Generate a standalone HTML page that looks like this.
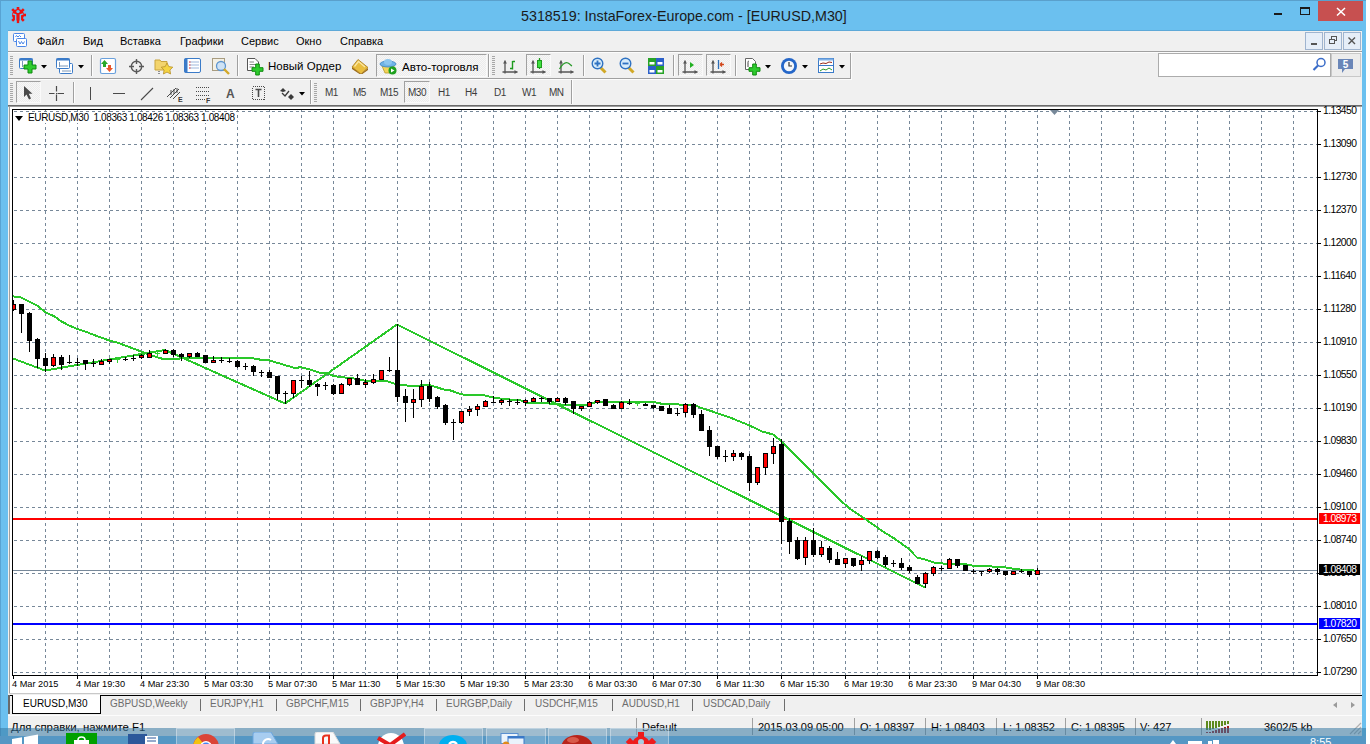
<!DOCTYPE html><html><head><meta charset="utf-8"><style>
*{margin:0;padding:0;box-sizing:border-box}
html,body{width:1370px;height:744px;overflow:hidden;background:#fff;font-family:"Liberation Sans", sans-serif}
.a{position:absolute}
.t{position:absolute;white-space:nowrap;line-height:1;font-family:"Liberation Sans", sans-serif}
</style></head><body><div class="a" style="left:0;top:0;width:1366px;height:744px;background:#6bc0ef;border-top:1px solid #5aa0cc;border-left:1px solid #58a3d3"></div>
<svg class="a" style="left:10px;top:7px" width="16" height="17"><circle cx="8" cy="8" r="6" fill="#ee1111"/><rect x="6.7" y="-0.2" width="2.6" height="3.5" fill="#ee1111" transform="rotate(180 8 8)"/><rect x="6.7" y="-0.2" width="2.6" height="3.5" fill="#ee1111" transform="rotate(225 8 8)"/><rect x="6.7" y="-0.2" width="2.6" height="3.5" fill="#ee1111" transform="rotate(315 8 8)"/><rect x="6.7" y="-0.2" width="2.6" height="3.5" fill="#ee1111" transform="rotate(360 8 8)"/><rect x="6.7" y="-0.2" width="2.6" height="3.5" fill="#ee1111" transform="rotate(405 8 8)"/><rect x="6.7" y="-0.2" width="2.6" height="3.5" fill="#ee1111" transform="rotate(450 8 8)"/><rect x="6.7" y="-0.2" width="2.6" height="3.5" fill="#ee1111" transform="rotate(495 8 8)"/><circle cx="8" cy="4.6" r="1.7" fill="#6bc0ef"/><path d="M2.8 6.9L5.7 7.9V16.5M13.2 6.9L10.3 7.9V16.5" stroke="#6bc0ef" stroke-width="1.5" fill="none"/><rect x="6.5" y="13.5" width="3" height="3" fill="#6bc0ef"/><path d="M8 6V16" stroke="#ee1111" stroke-width="2.2"/></svg>
<div class="t" style="left:521px;top:9px;font-size:14.3px;color:#1b1b1b;">5318519: InstaForex-Europe.com - [EURUSD,M30]</div>
<div class="a" style="left:1274px;top:13px;width:8px;height:2px;background:#1a1a1a"></div>
<div class="a" style="left:1300px;top:7px;width:10px;height:8px;border:1px solid #1a1a1a;border-top-width:2px"></div>
<div class="a" style="left:1318px;top:1px;width:45px;height:20px;background:#c75050"></div>
<svg class="a" style="left:1336px;top:7px" width="10" height="9"><path d="M1 1L9 8.5M9 1L1 8.5" stroke="#fff" stroke-width="1.5"/></svg>
<div class="a" style="left:8px;top:30px;width:1354px;height:1px;background:#5ea9d8"></div>
<div class="a" style="left:8px;top:31px;width:1354px;height:713px;background:#f0f0f0"></div>
<div class="a" style="left:8px;top:51px;width:1354px;height:1px;background:#a0a0a0"></div>
<div class="a" style="left:8px;top:52px;width:1354px;height:1px;background:#fcfcfc"></div>
<div class="a" style="left:8px;top:78px;width:843px;height:1px;background:#a0a0a0"></div>
<div class="a" style="left:8px;top:79px;width:844px;height:1px;background:#fcfcfc"></div>
<div class="a" style="left:8px;top:105px;width:1354px;height:1px;background:#6a6a6a"></div>
<div class="a" style="left:8px;top:106px;width:1354px;height:1px;background:#9c9c9c"></div>
<svg class="a" style="left:13px;top:33px" width="15" height="15"><rect x="0.5" y="0.5" width="11" height="8" rx="1" fill="#fff" stroke="#4a86e8"/><path d="M2.5 4L3.5 2.5L5 4L6.5 2.5L8 4" stroke="#4a86e8" fill="none"/><rect x="3.5" y="5.5" width="10" height="8" rx="1" fill="#fff" stroke="#4a86e8"/><path d="M5.5 8L7 11L8.5 8.5L10 11L11.5 8.5" stroke="#4a86e8" fill="none"/></svg>
<div class="t" style="left:37px;top:36px;font-size:11px;color:#000;">Файл</div>
<div class="t" style="left:83px;top:36px;font-size:11px;color:#000;">Вид</div>
<div class="t" style="left:120px;top:36px;font-size:11px;color:#000;">Вставка</div>
<div class="t" style="left:180px;top:36px;font-size:11px;color:#000;">Графики</div>
<div class="t" style="left:241px;top:36px;font-size:11px;color:#000;">Сервис</div>
<div class="t" style="left:296px;top:36px;font-size:11px;color:#000;">Окно</div>
<div class="t" style="left:340px;top:36px;font-size:11px;color:#000;">Справка</div>
<div class="a" style="left:1305px;top:32px;width:18px;height:18px;background:#e6eef8;border:1px solid #9fb4cf"></div><div class="a" style="left:1324px;top:32px;width:18px;height:18px;background:#e6eef8;border:1px solid #9fb4cf"></div><div class="a" style="left:1343px;top:32px;width:18px;height:18px;background:#e6eef8;border:1px solid #9fb4cf"></div><div class="a" style="left:1311px;top:43px;width:6px;height:2px;background:#555"></div><svg class="a" style="left:1328px;top:35px" width="10" height="10"><rect x="3.5" y="1.5" width="5" height="4" fill="none" stroke="#555"/><rect x="1.5" y="4.5" width="5" height="4" fill="#e6eef8" stroke="#555"/></svg><svg class="a" style="left:1347px;top:36px" width="10" height="10"><path d="M1.5 1.5L8 8M8 1.5L1.5 8" stroke="#555" stroke-width="1.4"/></svg>
<svg class="a" style="left:10px;top:56px" width="3" height="20"><rect x="0" y="0" width="3" height="1" fill="#a7a7a7"/><rect x="0" y="2" width="3" height="1" fill="#a7a7a7"/><rect x="0" y="4" width="3" height="1" fill="#a7a7a7"/><rect x="0" y="6" width="3" height="1" fill="#a7a7a7"/><rect x="0" y="8" width="3" height="1" fill="#a7a7a7"/><rect x="0" y="10" width="3" height="1" fill="#a7a7a7"/><rect x="0" y="12" width="3" height="1" fill="#a7a7a7"/><rect x="0" y="14" width="3" height="1" fill="#a7a7a7"/><rect x="0" y="16" width="3" height="1" fill="#a7a7a7"/><rect x="0" y="18" width="3" height="1" fill="#a7a7a7"/></svg><svg class="a" style="left:18px;top:57px" width="20" height="18"><rect x="1.5" y="1.5" width="13" height="10" rx="1" fill="#fff" stroke="#3b7bc8"/><rect x="1.5" y="1.5" width="13" height="2" fill="#3b7bc8"/><path d="M4.5 4V10" stroke="#7d98b8"/><path d="M10.0 4.0H14.0V8.0H18.0V12.0H14.0V16.0H10.0V12.0H6.0V8.0H10.0Z" fill="#2ecc2e" stroke="#0f8a0f" stroke-width="1"/></svg><svg class="a" style="left:41px;top:65px" width="6" height="4"><path d="M0 0H6L3 3.5Z" fill="#000"/></svg><svg class="a" style="left:55px;top:57px" width="20" height="18"><rect x="4.5" y="6.5" width="13" height="10" rx="1" fill="#fff" stroke="#3b7bc8"/><rect x="1.5" y="1.5" width="13" height="10" rx="1" fill="#fff" stroke="#3b7bc8"/><rect x="1.5" y="1.5" width="13" height="2" fill="#3b7bc8"/><path d="M4.5 5V10M4 9H13M7 14H16" stroke="#7d98b8"/></svg><svg class="a" style="left:78px;top:65px" width="6" height="4"><path d="M0 0H6L3 3.5Z" fill="#000"/></svg><div class="a" style="left:91px;top:55px;width:1px;height:21px;background:#a0a0a0"></div><div class="a" style="left:92px;top:55px;width:1px;height:21px;background:#fdfdfd"></div><svg class="a" style="left:99px;top:57px" width="18" height="18"><rect x="1.5" y="1.5" width="15" height="15" rx="1.5" fill="#fff" stroke="#6aa0dc" stroke-width="1.2"/><path d="M5.5 3L9 7H7V10H4V7H2Z" fill="#27a827"/><path d="M10.5 15L14 11H12V8H9V11H7Z" fill="#e8552a"/></svg><svg class="a" style="left:128px;top:58px" width="17" height="17"><circle cx="8.5" cy="8.5" r="5.2" fill="none" stroke="#5a5a5a" stroke-width="1.4"/><path d="M8.5 1V6M8.5 11V16M1 8.5H6M11 8.5H16" stroke="#5a5a5a" stroke-width="1.4"/></svg><svg class="a" style="left:154px;top:57px" width="20" height="18"><path d="M1 3H6L7 4.5H13V13H1Z" fill="#f3d46c" stroke="#c9a43c"/><path d="M13 6L14.8 9.6L18.8 10.2L15.9 13L16.6 17L13 15.1L9.4 17L10.1 13L7.2 10.2L11.2 9.6Z" fill="#f5d442" stroke="#b8902a" stroke-width="0.8"/><path d="M5 14V18" stroke="#333" stroke-dasharray="1 1"/></svg><svg class="a" style="left:184px;top:58px" width="17" height="16"><rect x="0.5" y="0.5" width="16" height="14" rx="1.5" fill="#fff" stroke="#3b7bc8"/><rect x="0.5" y="0.5" width="3" height="14" fill="#3b7bc8"/><path d="M6 4H15M6 7H15M6 10H15" stroke="#9db7dc"/><path d="M5 4H6.5M5 7H6.5M5 10H6.5" stroke="#e02020"/></svg><svg class="a" style="left:211px;top:57px" width="20" height="19"><rect x="1.5" y="1.5" width="12" height="12" fill="#f4f0e4" stroke="#a89c80"/><circle cx="10" cy="9" r="4.5" fill="#cfe3f5" stroke="#5f96cf" stroke-width="1.3"/><path d="M13 12L18 17" stroke="#d2a92a" stroke-width="2.4"/></svg><div class="a" style="left:237px;top:55px;width:1px;height:21px;background:#a0a0a0"></div><div class="a" style="left:238px;top:55px;width:1px;height:21px;background:#fdfdfd"></div><svg class="a" style="left:246px;top:57px" width="19" height="19"><path d="M1.5 1.5H9L12.5 5V13.5H1.5Z" fill="#fff" stroke="#555"/><path d="M3.5 5H8M3.5 7.5H10M3.5 10H8" stroke="#888"/><path d="M9.7 7.0H13.3V10.7H17.0V14.3H13.3V18.0H9.7V14.3H6.0V10.7H9.7Z" fill="#2ecc2e" stroke="#0f8a0f" stroke-width="1"/></svg><div class="t" style="left:268px;top:61px;font-size:11.5px;color:#000">Новый Ордер</div><svg class="a" style="left:351px;top:58px" width="18" height="16"><path d="M1 9L10 16L17 10V12L10 17L1 11Z" fill="#9a6a1a"/><path d="M1 9L7 1.5L17 9.5L10 16Z" fill="#e9bd3e" stroke="#a8781c" stroke-width="0.8"/><path d="M3.5 8.5L7.5 3.5L14 9" fill="none" stroke="#fbe7a2" stroke-width="1.3"/></svg><div class="a" style="left:376px;top:54px;width:111px;height:23px;border-left:1px solid #a0a0a0;border-top:1px solid #a0a0a0;border-right:1px solid #fafafa;border-bottom:1px solid #fafafa;background-color:#f7f7f7;background-image:linear-gradient(45deg,#ececec 25%,transparent 25%,transparent 75%,#ececec 75%),linear-gradient(45deg,#ececec 25%,transparent 25%,transparent 75%,#ececec 75%);background-size:2px 2px;background-position:0 0,1px 1px"></div><svg class="a" style="left:379px;top:58px" width="18" height="17"><path d="M3 8L15 8L13 15L6 15Z" fill="#f3d45a" stroke="#b89a2a" stroke-width="0.8"/><ellipse cx="9" cy="6" rx="8" ry="3" fill="#6fb3e6" stroke="#3a84c4" stroke-width="0.8"/><ellipse cx="9" cy="4" rx="4" ry="3" fill="#8cc6ef"/><circle cx="13.5" cy="12.5" r="4" fill="#1ea01e"/><path d="M12 10.5L15.5 12.5L12 14.5Z" fill="#fff"/></svg><div class="t" style="left:402px;top:61px;font-size:11.6px;color:#000">Авто-торговля</div><div class="a" style="left:488px;top:54px;width:1px;height:23px;background:#a0a0a0"></div><div class="a" style="left:489px;top:54px;width:1px;height:23px;background:#fdfdfd"></div><svg class="a" style="left:492px;top:56px" width="3" height="20"><rect x="0" y="0" width="3" height="1" fill="#a7a7a7"/><rect x="0" y="2" width="3" height="1" fill="#a7a7a7"/><rect x="0" y="4" width="3" height="1" fill="#a7a7a7"/><rect x="0" y="6" width="3" height="1" fill="#a7a7a7"/><rect x="0" y="8" width="3" height="1" fill="#a7a7a7"/><rect x="0" y="10" width="3" height="1" fill="#a7a7a7"/><rect x="0" y="12" width="3" height="1" fill="#a7a7a7"/><rect x="0" y="14" width="3" height="1" fill="#a7a7a7"/><rect x="0" y="16" width="3" height="1" fill="#a7a7a7"/><rect x="0" y="18" width="3" height="1" fill="#a7a7a7"/></svg><svg class="a" style="left:502px;top:58px" width="17" height="16"><path d="M3.0 2.5V15.5 M0.5 14.0H15.5" stroke="#555" stroke-width="1.3" fill="none"/><path d="M1.0 5.5L3.0 2.5L5.0 5.5Z M12.5 12.0L15.5 14.0L12.5 16.0Z" fill="#555"/><path d="M10.5 3V11.5M10.5 3.5H13M8 10.5H10.5" stroke="#1d9a1d" stroke-width="1.4" fill="none"/></svg><div class="a" style="left:526px;top:54px;width:25px;height:22px;border-left:1px solid #a0a0a0;border-top:1px solid #a0a0a0;border-right:1px solid #fafafa;border-bottom:1px solid #fafafa;background-color:#f7f7f7;background-image:linear-gradient(45deg,#ececec 25%,transparent 25%,transparent 75%,#ececec 75%),linear-gradient(45deg,#ececec 25%,transparent 25%,transparent 75%,#ececec 75%);background-size:2px 2px;background-position:0 0,1px 1px"></div><svg class="a" style="left:530px;top:57px" width="17" height="17"><path d="M3.0 3.5V16.5 M0.5 15.0H15.5" stroke="#555" stroke-width="1.3" fill="none"/><path d="M1.0 6.5L3.0 3.5L5.0 6.5Z M12.5 13.0L15.5 15.0L12.5 17.0Z" fill="#555"/><path d="M9.5 1V12" stroke="#1d9a1d" stroke-width="1.3"/><rect x="7.5" y="3.5" width="4" height="7" fill="#3ee03e" stroke="#1d9a1d"/></svg><svg class="a" style="left:558px;top:58px" width="17" height="16"><path d="M3.0 2.5V15.5 M0.5 14.0H15.5" stroke="#555" stroke-width="1.3" fill="none"/><path d="M1.0 5.5L3.0 2.5L5.0 5.5Z M12.5 12.0L15.5 14.0L12.5 16.0Z" fill="#555"/><path d="M1.5 11C5 5 8 4 10 5S13 7.5 14 8" stroke="#2a9a2a" stroke-width="1.2" fill="none"/></svg><div class="a" style="left:583px;top:55px;width:1px;height:21px;background:#a0a0a0"></div><div class="a" style="left:584px;top:55px;width:1px;height:21px;background:#fdfdfd"></div><svg class="a" style="left:591px;top:57px" width="18" height="18"><path d="M9 10L14.5 15.5" stroke="#d1a826" stroke-width="3"/><circle cx="6.5" cy="6.5" r="5.3" fill="#d8ecfa" stroke="#2f72c2" stroke-width="1.4"/><path d="M6.5 3.5V9.5M3.5 6.5H9.5" stroke="#2f72c2" stroke-width="1.8"/></svg><svg class="a" style="left:619px;top:57px" width="18" height="18"><path d="M9 10L14.5 15.5" stroke="#d1a826" stroke-width="3"/><circle cx="6.5" cy="6.5" r="5.3" fill="#d8ecfa" stroke="#2f72c2" stroke-width="1.4"/><path d="M3.5 6.5H9.5" stroke="#2f72c2" stroke-width="1.8"/></svg><svg class="a" style="left:647px;top:57px" width="18" height="18"><rect x="1" y="1" width="8" height="8" fill="#27a327"/><rect x="9" y="1" width="8" height="8" fill="#2c60c9"/><rect x="1" y="9" width="8" height="8" fill="#2c60c9"/><rect x="9" y="9" width="8" height="8" fill="#27a327"/><path d="M2.5 5H7.5V7.5H2.5ZM10.5 5H15.5V7.5H10.5ZM2.5 13H7.5V15.5H2.5ZM10.5 13H15.5V15.5H10.5Z" fill="#fff"/></svg><div class="a" style="left:673px;top:55px;width:1px;height:21px;background:#a0a0a0"></div><div class="a" style="left:674px;top:55px;width:1px;height:21px;background:#fdfdfd"></div><div class="a" style="left:678px;top:54px;width:25px;height:22px;border-left:1px solid #a0a0a0;border-top:1px solid #a0a0a0;border-right:1px solid #fafafa;border-bottom:1px solid #fafafa;background-color:#f7f7f7;background-image:linear-gradient(45deg,#ececec 25%,transparent 25%,transparent 75%,#ececec 75%),linear-gradient(45deg,#ececec 25%,transparent 25%,transparent 75%,#ececec 75%);background-size:2px 2px;background-position:0 0,1px 1px"></div><svg class="a" style="left:682px;top:58px" width="17" height="16"><path d="M3.0 2.5V15.5 M0.5 14.0H15.5" stroke="#555" stroke-width="1.3" fill="none"/><path d="M1.0 5.5L3.0 2.5L5.0 5.5Z M12.5 12.0L15.5 14.0L12.5 16.0Z" fill="#555"/><path d="M8 4V10L12 7Z" fill="#22b022"/></svg><div class="a" style="left:706px;top:54px;width:25px;height:22px;border-left:1px solid #a0a0a0;border-top:1px solid #a0a0a0;border-right:1px solid #fafafa;border-bottom:1px solid #fafafa;background-color:#f7f7f7;background-image:linear-gradient(45deg,#ececec 25%,transparent 25%,transparent 75%,#ececec 75%),linear-gradient(45deg,#ececec 25%,transparent 25%,transparent 75%,#ececec 75%);background-size:2px 2px;background-position:0 0,1px 1px"></div><svg class="a" style="left:710px;top:58px" width="17" height="16"><path d="M3.0 2.5V15.5 M0.5 14.0H15.5" stroke="#555" stroke-width="1.3" fill="none"/><path d="M1.0 5.5L3.0 2.5L5.0 5.5Z M12.5 12.0L15.5 14.0L12.5 16.0Z" fill="#555"/><path d="M8.5 2V11" stroke="#2c6fb8" stroke-width="1.3"/><path d="M10 6.5H14M10 6.5L12 4.5M10 6.5L12 8.5" stroke="#d2461a" stroke-width="1.3"/></svg><div class="a" style="left:735px;top:55px;width:1px;height:21px;background:#a0a0a0"></div><div class="a" style="left:736px;top:55px;width:1px;height:21px;background:#fdfdfd"></div><svg class="a" style="left:744px;top:57px" width="18" height="19"><path d="M1.5 1.5H8.5L11.5 4.5V12.5H1.5Z" fill="#fff" stroke="#666"/><path d="M5 4C4 4 4 5 4 6V10" stroke="#444" fill="none"/><path d="M8.7 7.0H12.3V10.7H16.0V14.3H12.3V18.0H8.7V14.3H5.0V10.7H8.7Z" fill="#2ecc2e" stroke="#0f8a0f" stroke-width="1"/></svg><svg class="a" style="left:765px;top:65px" width="6" height="4"><path d="M0 0H6L3 3.5Z" fill="#000"/></svg><svg class="a" style="left:780px;top:57px" width="18" height="18"><circle cx="9" cy="9" r="8" fill="#2466c8"/><circle cx="9" cy="9" r="5.2" fill="#f4f7fb"/><path d="M9 5V9H12" stroke="#333" stroke-width="1.2" fill="none"/></svg><svg class="a" style="left:802px;top:65px" width="6" height="4"><path d="M0 0H6L3 3.5Z" fill="#000"/></svg><svg class="a" style="left:817px;top:57px" width="18" height="17"><rect x="1.5" y="1.5" width="15" height="14" fill="#fff" stroke="#3b7bc8"/><rect x="1.5" y="1.5" width="15" height="2" fill="#7fb0e6"/><path d="M1.5 8.5H16.5" stroke="#3b7bc8"/><path d="M3 7L6 6L9 6.5L12 5L15 5.5" stroke="#9a2a1a" fill="none"/><path d="M3 14L6 12L9 13L12 11L15 13" stroke="#2a9a2a" fill="none"/></svg><svg class="a" style="left:839px;top:65px" width="6" height="4"><path d="M0 0H6L3 3.5Z" fill="#000"/></svg><div class="a" style="left:850px;top:53px;width:1px;height:26px;background:#a0a0a0"></div><div class="a" style="left:851px;top:53px;width:1px;height:27px;background:#fcfcfc"></div>
<svg class="a" style="left:10px;top:83px" width="3" height="20"><rect x="0" y="0" width="3" height="1" fill="#a7a7a7"/><rect x="0" y="2" width="3" height="1" fill="#a7a7a7"/><rect x="0" y="4" width="3" height="1" fill="#a7a7a7"/><rect x="0" y="6" width="3" height="1" fill="#a7a7a7"/><rect x="0" y="8" width="3" height="1" fill="#a7a7a7"/><rect x="0" y="10" width="3" height="1" fill="#a7a7a7"/><rect x="0" y="12" width="3" height="1" fill="#a7a7a7"/><rect x="0" y="14" width="3" height="1" fill="#a7a7a7"/><rect x="0" y="16" width="3" height="1" fill="#a7a7a7"/><rect x="0" y="18" width="3" height="1" fill="#a7a7a7"/></svg><div class="a" style="left:16px;top:81px;width:25px;height:22px;border-left:1px solid #a0a0a0;border-top:1px solid #a0a0a0;border-right:1px solid #fafafa;border-bottom:1px solid #fafafa;background-color:#f7f7f7;background-image:linear-gradient(45deg,#ececec 25%,transparent 25%,transparent 75%,#ececec 75%),linear-gradient(45deg,#ececec 25%,transparent 25%,transparent 75%,#ececec 75%);background-size:2px 2px;background-position:0 0,1px 1px"></div><svg class="a" style="left:23px;top:85px" width="10" height="16"><path d="M1 1V12L3.5 9.5L6 14.5L8 13.5L5.8 8.8H9.5Z" fill="#4a4a4a"/></svg><svg class="a" style="left:48px;top:85px" width="17" height="17"><path d="M8.5 1V6.5M8.5 9.5V16M1 8.5H6.5M9.5 8.5H16" stroke="#4a4a4a" stroke-width="1.2"/><rect x="8" y="8" width="1" height="1" fill="#4a4a4a"/></svg><div class="a" style="left:73px;top:82px;width:1px;height:21px;background:#a0a0a0"></div><div class="a" style="left:74px;top:82px;width:1px;height:21px;background:#fdfdfd"></div><div class="a" style="left:90px;top:87px;width:1px;height:13px;background:#4a4a4a"></div><div class="a" style="left:113px;top:93px;width:12px;height:1px;background:#4a4a4a"></div><svg class="a" style="left:140px;top:87px" width="14" height="14"><path d="M1 13L13 1" stroke="#4a4a4a" stroke-width="1.1"/></svg><svg class="a" style="left:166px;top:85px" width="18" height="18"><path d="M1 12L10 3M4 13L13 4M7 14L14 7" stroke="#4a4a4a" stroke-width="1"/><path d="M5 5V10M8 4V9M11 3V8" stroke="#4a4a4a" stroke-width="1"/><text x="12" y="17" font-size="7" font-weight="bold" fill="#3a3a3a" font-family="Liberation Sans">E</text></svg><svg class="a" style="left:196px;top:86px" width="16" height="17"><path d="M0 1.5H14M0 5.5H14M0 9.5H14M0 13.5H10" stroke="#4a4a4a" stroke-dasharray="1 1" shape-rendering="crispEdges"/><text x="10" y="16.5" font-size="7" font-weight="bold" fill="#3a3a3a" font-family="Liberation Sans">F</text></svg><div class="t" style="left:226px;top:88px;font-size:12px;font-weight:bold;color:#555">A</div><svg class="a" style="left:252px;top:86px" width="14" height="15"><rect x="0.5" y="0.5" width="12" height="13" fill="none" stroke="#4a4a4a" stroke-dasharray="1 1" shape-rendering="crispEdges"/><path d="M3.5 3.5H9.5M6.5 3.5V11" stroke="#4a4a4a" stroke-width="1.6"/></svg><svg class="a" style="left:279px;top:87px" width="16" height="14"><path d="M1 4L4 1L7 4L4 5Z" fill="#3a3a3a"/><path d="M9 10L12 7L15 10L12 13Z" fill="#3a3a3a"/><path d="M3 6L6 9L10 4" stroke="#3a3a3a" stroke-width="1.3" fill="none"/></svg><svg class="a" style="left:299px;top:92px" width="6" height="4"><path d="M0 0H6L3 3.5Z" fill="#000"/></svg><div class="a" style="left:310px;top:80px;width:1px;height:24px;background:#a0a0a0"></div><div class="a" style="left:311px;top:80px;width:1px;height:24px;background:#fdfdfd"></div><svg class="a" style="left:314px;top:83px" width="3" height="20"><rect x="0" y="0" width="3" height="1" fill="#a7a7a7"/><rect x="0" y="2" width="3" height="1" fill="#a7a7a7"/><rect x="0" y="4" width="3" height="1" fill="#a7a7a7"/><rect x="0" y="6" width="3" height="1" fill="#a7a7a7"/><rect x="0" y="8" width="3" height="1" fill="#a7a7a7"/><rect x="0" y="10" width="3" height="1" fill="#a7a7a7"/><rect x="0" y="12" width="3" height="1" fill="#a7a7a7"/><rect x="0" y="14" width="3" height="1" fill="#a7a7a7"/><rect x="0" y="16" width="3" height="1" fill="#a7a7a7"/><rect x="0" y="18" width="3" height="1" fill="#a7a7a7"/></svg><div class="t" style="left:325px;top:88px;font-size:10px;letter-spacing:-0.5px;color:#3c3c3c">M1</div><div class="t" style="left:353px;top:88px;font-size:10px;letter-spacing:-0.5px;color:#3c3c3c">M5</div><div class="t" style="left:380px;top:88px;font-size:10px;letter-spacing:-0.5px;color:#3c3c3c">M15</div><div class="a" style="left:404px;top:81px;width:26px;height:22px;border-left:1px solid #a0a0a0;border-top:1px solid #a0a0a0;border-right:1px solid #fafafa;border-bottom:1px solid #fafafa;background-color:#f7f7f7;background-image:linear-gradient(45deg,#ececec 25%,transparent 25%,transparent 75%,#ececec 75%),linear-gradient(45deg,#ececec 25%,transparent 25%,transparent 75%,#ececec 75%);background-size:2px 2px;background-position:0 0,1px 1px"></div><div class="t" style="left:408px;top:88px;font-size:10px;letter-spacing:-0.5px;color:#3c3c3c">M30</div><div class="t" style="left:438px;top:88px;font-size:10px;letter-spacing:-0.5px;color:#3c3c3c">H1</div><div class="t" style="left:465px;top:88px;font-size:10px;letter-spacing:-0.5px;color:#3c3c3c">H4</div><div class="t" style="left:494px;top:88px;font-size:10px;letter-spacing:-0.5px;color:#3c3c3c">D1</div><div class="t" style="left:522px;top:88px;font-size:10px;letter-spacing:-0.5px;color:#3c3c3c">W1</div><div class="t" style="left:549px;top:88px;font-size:10px;letter-spacing:-0.5px;color:#3c3c3c">MN</div><div class="a" style="left:571px;top:80px;width:1px;height:24px;background:#a0a0a0"></div><div class="a" style="left:572px;top:80px;width:1px;height:24px;background:#fdfdfd"></div>
<div class="a" style="left:1158px;top:53px;width:173px;height:24px;background:#fff;border:1px solid #acacac"></div><div class="a" style="left:1331px;top:53px;width:30px;height:24px;background:#ececec;border:1px solid #c8c8c8"></div><svg class="a" style="left:1337px;top:58px" width="17" height="16"><path d="M1 1H16V11H8L5 15V11H1Z" fill="#6a86b8"/><text x="8.5" y="10" font-size="10" font-weight="bold" fill="#fff" text-anchor="middle" font-family="Liberation Sans">5</text></svg><svg class="a" style="left:1312px;top:57px" width="15" height="15"><circle cx="9" cy="5.5" r="4" fill="none" stroke="#3a6cc8" stroke-width="1.5"/><path d="M6 8.5L1.5 13" stroke="#3a6cc8" stroke-width="2.2"/></svg>
<div class="a" style="left:9px;top:107px;width:1px;height:587px;background:#a0a0a0"></div>
<div class="a" style="left:10px;top:107px;width:1351px;height:586px;background:#fff;border-right:1px solid #dcdcdc"></div>
<div class="a" style="left:9px;top:693px;width:1352px;height:1px;background:#c8c8c8"></div>
<div class="a" style="left:1361px;top:107px;width:1px;height:587px;background:#fff"></div>
<svg width="1370" height="744" style="position:absolute;left:0;top:0">
<defs><clipPath id="pc"><rect x="13" y="110" width="1304" height="565"/></clipPath></defs>
<g clip-path="url(#pc)">
<g shape-rendering="crispEdges">
<path d="M14 111.5H1317 M14 144.5H1317 M14 177.5H1317 M14 210.5H1317 M14 243.5H1317 M14 276.5H1317 M14 309.5H1317 M14 342.5H1317 M14 375.5H1317 M14 408.5H1317 M14 441.5H1317 M14 474.5H1317 M14 507.5H1317 M14 540.5H1317 M14 573.5H1317 M14 606.5H1317 M14 639.5H1317 M14 672.5H1317" stroke="#778899" stroke-width="1" stroke-dasharray="3 3" fill="none"/>
<path d="M45.5 109V675 M77.5 109V675 M109.5 109V675 M141.5 109V675 M173.5 109V675 M205.5 109V675 M237.5 109V675 M269.5 109V675 M301.5 109V675 M333.5 109V675 M365.5 109V675 M397.5 109V675 M429.5 109V675 M461.5 109V675 M493.5 109V675 M525.5 109V675 M557.5 109V675 M589.5 109V675 M621.5 109V675 M653.5 109V675 M685.5 109V675 M717.5 109V675 M749.5 109V675 M781.5 109V675 M813.5 109V675 M845.5 109V675 M877.5 109V675 M909.5 109V675 M941.5 109V675 M973.5 109V675 M1005.5 109V675 M1037.5 109V675 M1069.5 109V675 M1101.5 109V675 M1133.5 109V675 M1165.5 109V675 M1197.5 109V675 M1229.5 109V675 M1261.5 109V675 M1293.5 109V675" stroke="#778899" stroke-width="1" stroke-dasharray="3 3" fill="none"/>
<rect x="13" y="518" width="1304" height="2" fill="#ff0000"/>
<rect x="13" y="623" width="1304" height="2" fill="#0000ff"/>
<rect x="13" y="570" width="1304" height="1" fill="#778899"/>
</g>
<polyline points="12.7,296.3 20.8,297.3 36.9,305.5 45.6,312.4 54.4,316.4 61,321.1 69,325.5 77,328.9 85,331.5 93,334.5 101.4,337.7 109.5,340.5 117.2,342.5 128.5,346.8 142.6,352.0 152,355.5 161.4,358.5 180,358.5 200,358.4 214,357.5 237.6,357.5 253.6,358.4 261,359.8 269.6,360.5 275,362.1 294,367.8 301.5,367.3 311,369.7 319,372.5 327.3,373.3 333.7,376.0 343.4,377.4 353,378.2 359.5,380.2 375.6,381.4 387.7,381.4 395,383.8 410,386.0 429.5,385.0 445,389.9 449.4,390.1 461.4,394.3 470,395.3 484.2,395.3 493.6,397.6 504,399.0 521,400.5 525.4,402.8 540,403.3 557,403.7 564.2,405.3 586,405.3 594.9,402.4 635,402.4 653.7,402.1 662.3,403.9 677.3,404.3 683.8,405.0 695.6,405.3 700,407.5 710.6,410.9 730,417.5 736,420.0 749,425.2 762,431.5 773.2,434.5 781.3,441.3 800,459.9 840.6,500.5 850.3,509.1 863.2,517.7 875,525.8 881.3,530.5 893.5,538.0 907.6,547.9 917.5,558.0 922.7,558.7 934,562.5 942.4,563.5 960,564.3 965.8,564.3 973.9,565.8 989.2,566.3 1005.3,567.4 1013.6,568.7 1022,569.8 1037.5,570.7" fill="none" stroke="#2ac82a" stroke-width="2" stroke-linejoin="round" shape-rendering="crispEdges"/>
<polyline points="13,358.5 45,370.5 165,350.0 285,403.5 397,324.5 925,587.5" fill="none" stroke="#2ac82a" stroke-width="2" stroke-linejoin="round" shape-rendering="crispEdges"/>
<g shape-rendering="crispEdges">
<rect x="69" y="355" width="1" height="9" fill="#000"/>
<rect x="67" y="362" width="5" height="1" fill="#000"/>
<rect x="77" y="358" width="1" height="8" fill="#000"/>
<rect x="75" y="362" width="5" height="1" fill="#000"/>
<rect x="93" y="359" width="1" height="8" fill="#000"/>
<rect x="91" y="363" width="5" height="1" fill="#000"/>
<rect x="117" y="357" width="1" height="6" fill="#32cd32"/>
<rect x="115" y="359" width="5" height="1" fill="#32cd32"/>
<rect x="125" y="357" width="1" height="4" fill="#000"/>
<rect x="123" y="359" width="5" height="1" fill="#000"/>
<rect x="133" y="355" width="1" height="6" fill="#000"/>
<rect x="131" y="358" width="5" height="1" fill="#000"/>
<rect x="157" y="351" width="1" height="6" fill="#32cd32"/>
<rect x="155" y="353" width="5" height="1" fill="#32cd32"/>
<rect x="221" y="357" width="1" height="6" fill="#000"/>
<rect x="219" y="360" width="5" height="1" fill="#000"/>
<rect x="229" y="358" width="1" height="5" fill="#000"/>
<rect x="227" y="361" width="5" height="1" fill="#000"/>
<rect x="245" y="363" width="1" height="7" fill="#000"/>
<rect x="243" y="366" width="5" height="1" fill="#000"/>
<rect x="261" y="370" width="1" height="7" fill="#000"/>
<rect x="259" y="372" width="5" height="1" fill="#000"/>
<rect x="285" y="391" width="1" height="13" fill="#000"/>
<rect x="283" y="393" width="5" height="1" fill="#000"/>
<rect x="301" y="376" width="1" height="12" fill="#000"/>
<rect x="299" y="380" width="5" height="1" fill="#000"/>
<rect x="325" y="382" width="1" height="8" fill="#000"/>
<rect x="323" y="385" width="5" height="1" fill="#000"/>
<rect x="389" y="357" width="1" height="15" fill="#000"/>
<rect x="387" y="370" width="5" height="1" fill="#000"/>
<rect x="453" y="419" width="1" height="21" fill="#000"/>
<rect x="451" y="422" width="5" height="1" fill="#000"/>
<rect x="493" y="396" width="1" height="7" fill="#000"/>
<rect x="491" y="402" width="5" height="1" fill="#000"/>
<rect x="509" y="399" width="1" height="7" fill="#000"/>
<rect x="507" y="401" width="5" height="1" fill="#000"/>
<rect x="517" y="399" width="1" height="6" fill="#000"/>
<rect x="515" y="402" width="5" height="1" fill="#000"/>
<rect x="541" y="397" width="1" height="5" fill="#000"/>
<rect x="539" y="398" width="5" height="1" fill="#000"/>
<rect x="629" y="399" width="1" height="6" fill="#000"/>
<rect x="627" y="403" width="5" height="1" fill="#000"/>
<rect x="637" y="402" width="1" height="4" fill="#32cd32"/>
<rect x="635" y="403" width="5" height="1" fill="#32cd32"/>
<rect x="677" y="408" width="1" height="8" fill="#000"/>
<rect x="675" y="413" width="5" height="1" fill="#000"/>
<rect x="725" y="450" width="1" height="12" fill="#000"/>
<rect x="723" y="456" width="5" height="1" fill="#000"/>
<rect x="893" y="560" width="1" height="7" fill="#000"/>
<rect x="891" y="563" width="5" height="1" fill="#000"/>
<rect x="941" y="566" width="1" height="5" fill="#000"/>
<rect x="939" y="568" width="5" height="1" fill="#000"/>
<rect x="973" y="569" width="1" height="5" fill="#000"/>
<rect x="971" y="571" width="5" height="1" fill="#000"/>
<rect x="981" y="571" width="1" height="5" fill="#000"/>
<rect x="979" y="571" width="5" height="1" fill="#000"/>
<rect x="1021" y="569" width="1" height="4" fill="#000"/>
<rect x="1019" y="571" width="5" height="1" fill="#000"/>
<g fill="#000"><rect x="13" y="300" width="1" height="11"/><rect x="21" y="304" width="1" height="29"/><rect x="29" y="312" width="1" height="40"/><rect x="37" y="338" width="1" height="30"/><rect x="45" y="353" width="1" height="19"/><rect x="53" y="354" width="1" height="13"/><rect x="61" y="355" width="1" height="15"/><rect x="85" y="360" width="1" height="10"/><rect x="101" y="359" width="1" height="6"/><rect x="109" y="359" width="1" height="5"/><rect x="141" y="354" width="1" height="5"/><rect x="149" y="350" width="1" height="8"/><rect x="165" y="349" width="1" height="5"/><rect x="173" y="349" width="1" height="8"/><rect x="181" y="353" width="1" height="8"/><rect x="189" y="353" width="1" height="5"/><rect x="197" y="352" width="1" height="5"/><rect x="205" y="355" width="1" height="8"/><rect x="213" y="356" width="1" height="7"/><rect x="237" y="360" width="1" height="8"/><rect x="253" y="365" width="1" height="11"/><rect x="269" y="370" width="1" height="8"/><rect x="277" y="376" width="1" height="24"/><rect x="293" y="380" width="1" height="18"/><rect x="309" y="371" width="1" height="16"/><rect x="317" y="383" width="1" height="13"/><rect x="333" y="384" width="1" height="11"/><rect x="341" y="383" width="1" height="11"/><rect x="349" y="378" width="1" height="8"/><rect x="357" y="374" width="1" height="11"/><rect x="365" y="379" width="1" height="9"/><rect x="373" y="374" width="1" height="10"/><rect x="381" y="370" width="1" height="10"/><rect x="397" y="324" width="1" height="78"/><rect x="405" y="389" width="1" height="33"/><rect x="413" y="389" width="1" height="29"/><rect x="421" y="380" width="1" height="27"/><rect x="429" y="382" width="1" height="20"/><rect x="437" y="396" width="1" height="13"/><rect x="445" y="404" width="1" height="21"/><rect x="461" y="411" width="1" height="13"/><rect x="469" y="406" width="1" height="10"/><rect x="477" y="404" width="1" height="12"/><rect x="485" y="400" width="1" height="7"/><rect x="501" y="399" width="1" height="6"/><rect x="525" y="399" width="1" height="7"/><rect x="533" y="397" width="1" height="5"/><rect x="549" y="398" width="1" height="6"/><rect x="557" y="397" width="1" height="5"/><rect x="565" y="397" width="1" height="8"/><rect x="573" y="401" width="1" height="13"/><rect x="581" y="406" width="1" height="5"/><rect x="589" y="401" width="1" height="6"/><rect x="597" y="400" width="1" height="4"/><rect x="605" y="399" width="1" height="7"/><rect x="613" y="404" width="1" height="5"/><rect x="621" y="401" width="1" height="8"/><rect x="645" y="403" width="1" height="3"/><rect x="653" y="405" width="1" height="4"/><rect x="661" y="406" width="1" height="5"/><rect x="669" y="405" width="1" height="9"/><rect x="685" y="403" width="1" height="14"/><rect x="693" y="403" width="1" height="15"/><rect x="701" y="410" width="1" height="21"/><rect x="709" y="426" width="1" height="30"/><rect x="717" y="446" width="1" height="13"/><rect x="733" y="450" width="1" height="11"/><rect x="741" y="452" width="1" height="8"/><rect x="749" y="454" width="1" height="37"/><rect x="757" y="467" width="1" height="18"/><rect x="765" y="453" width="1" height="22"/><rect x="773" y="438" width="1" height="26"/><rect x="781" y="439" width="1" height="105"/><rect x="789" y="518" width="1" height="36"/><rect x="797" y="537" width="1" height="23"/><rect x="805" y="537" width="1" height="28"/><rect x="813" y="528" width="1" height="29"/><rect x="821" y="541" width="1" height="16"/><rect x="829" y="546" width="1" height="17"/><rect x="837" y="552" width="1" height="13"/><rect x="845" y="558" width="1" height="10"/><rect x="853" y="558" width="1" height="9"/><rect x="861" y="556" width="1" height="15"/><rect x="869" y="551" width="1" height="13"/><rect x="877" y="550" width="1" height="9"/><rect x="885" y="555" width="1" height="12"/><rect x="901" y="558" width="1" height="12"/><rect x="909" y="565" width="1" height="8"/><rect x="917" y="575" width="1" height="9"/><rect x="925" y="572" width="1" height="16"/><rect x="933" y="566" width="1" height="10"/><rect x="949" y="558" width="1" height="11"/><rect x="957" y="559" width="1" height="9"/><rect x="965" y="565" width="1" height="6"/><rect x="989" y="568" width="1" height="5"/><rect x="997" y="568" width="1" height="7"/><rect x="1005" y="571" width="1" height="5"/><rect x="1013" y="571" width="1" height="4"/><rect x="1029" y="571" width="1" height="6"/><rect x="1037" y="568" width="1" height="7"/><rect x="11" y="304" width="5" height="6"/><rect x="19" y="304" width="5" height="10"/><rect x="27" y="313" width="5" height="28"/><rect x="35" y="339" width="5" height="20"/><rect x="43" y="358" width="5" height="8"/><rect x="51" y="357" width="5" height="9"/><rect x="59" y="357" width="5" height="8"/><rect x="83" y="360" width="5" height="4"/><rect x="99" y="361" width="5" height="4"/><rect x="107" y="359" width="5" height="3"/><rect x="139" y="355" width="5" height="3"/><rect x="147" y="353" width="5" height="5"/><rect x="163" y="350" width="5" height="4"/><rect x="171" y="350" width="5" height="5"/><rect x="179" y="354" width="5" height="3"/><rect x="187" y="353" width="5" height="4"/><rect x="195" y="353" width="5" height="4"/><rect x="203" y="355" width="5" height="8"/><rect x="211" y="360" width="5" height="3"/><rect x="235" y="361" width="5" height="6"/><rect x="251" y="366" width="5" height="6"/><rect x="267" y="372" width="5" height="6"/><rect x="275" y="376" width="5" height="18"/><rect x="291" y="380" width="5" height="14"/><rect x="307" y="380" width="5" height="5"/><rect x="315" y="384" width="5" height="3"/><rect x="331" y="385" width="5" height="9"/><rect x="339" y="384" width="5" height="10"/><rect x="347" y="378" width="5" height="7"/><rect x="355" y="378" width="5" height="7"/><rect x="363" y="382" width="5" height="3"/><rect x="371" y="379" width="5" height="4"/><rect x="379" y="370" width="5" height="10"/><rect x="395" y="370" width="5" height="27"/><rect x="403" y="396" width="5" height="7"/><rect x="411" y="399" width="5" height="4"/><rect x="419" y="386" width="5" height="14"/><rect x="427" y="386" width="5" height="13"/><rect x="435" y="397" width="5" height="10"/><rect x="443" y="405" width="5" height="18"/><rect x="459" y="411" width="5" height="12"/><rect x="467" y="409" width="5" height="3"/><rect x="475" y="406" width="5" height="4"/><rect x="483" y="401" width="5" height="6"/><rect x="499" y="400" width="5" height="3"/><rect x="523" y="400" width="5" height="3"/><rect x="531" y="398" width="5" height="4"/><rect x="547" y="398" width="5" height="4"/><rect x="555" y="398" width="5" height="4"/><rect x="563" y="398" width="5" height="5"/><rect x="571" y="401" width="5" height="8"/><rect x="579" y="406" width="5" height="3"/><rect x="587" y="402" width="5" height="5"/><rect x="595" y="400" width="5" height="3"/><rect x="603" y="399" width="5" height="7"/><rect x="611" y="405" width="5" height="4"/><rect x="619" y="402" width="5" height="7"/><rect x="643" y="404" width="5" height="2"/><rect x="651" y="405" width="5" height="3"/><rect x="659" y="406" width="5" height="5"/><rect x="667" y="408" width="5" height="6"/><rect x="683" y="404" width="5" height="9"/><rect x="691" y="404" width="5" height="11"/><rect x="699" y="414" width="5" height="17"/><rect x="707" y="430" width="5" height="17"/><rect x="715" y="446" width="5" height="11"/><rect x="731" y="453" width="5" height="4"/><rect x="739" y="453" width="5" height="4"/><rect x="747" y="456" width="5" height="27"/><rect x="755" y="467" width="5" height="16"/><rect x="763" y="453" width="5" height="15"/><rect x="771" y="446" width="5" height="8"/><rect x="779" y="444" width="5" height="78"/><rect x="787" y="521" width="5" height="21"/><rect x="795" y="540" width="5" height="19"/><rect x="803" y="540" width="5" height="18"/><rect x="811" y="540" width="5" height="15"/><rect x="819" y="547" width="5" height="8"/><rect x="827" y="548" width="5" height="12"/><rect x="835" y="559" width="5" height="6"/><rect x="843" y="558" width="5" height="6"/><rect x="851" y="558" width="5" height="8"/><rect x="859" y="560" width="5" height="5"/><rect x="867" y="551" width="5" height="10"/><rect x="875" y="551" width="5" height="7"/><rect x="883" y="557" width="5" height="8"/><rect x="899" y="563" width="5" height="5"/><rect x="907" y="567" width="5" height="4"/><rect x="915" y="577" width="5" height="7"/><rect x="923" y="573" width="5" height="11"/><rect x="931" y="567" width="5" height="7"/><rect x="947" y="559" width="5" height="10"/><rect x="955" y="559" width="5" height="7"/><rect x="963" y="565" width="5" height="6"/><rect x="987" y="569" width="5" height="3"/><rect x="995" y="569" width="5" height="3"/><rect x="1003" y="571" width="5" height="4"/><rect x="1011" y="571" width="5" height="4"/><rect x="1027" y="571" width="5" height="4"/><rect x="1035" y="570" width="5" height="5"/></g>
<g fill="#ff0000"><rect x="12" y="305" width="3" height="4"/><rect x="52" y="358" width="3" height="7"/><rect x="100" y="362" width="3" height="2"/><rect x="108" y="360" width="3" height="1"/><rect x="140" y="356" width="3" height="1"/><rect x="148" y="354" width="3" height="3"/><rect x="164" y="351" width="3" height="2"/><rect x="188" y="354" width="3" height="2"/><rect x="212" y="361" width="3" height="1"/><rect x="292" y="381" width="3" height="12"/><rect x="340" y="385" width="3" height="8"/><rect x="348" y="379" width="3" height="5"/><rect x="364" y="383" width="3" height="1"/><rect x="372" y="380" width="3" height="2"/><rect x="380" y="371" width="3" height="8"/><rect x="412" y="400" width="3" height="2"/><rect x="420" y="387" width="3" height="12"/><rect x="460" y="412" width="3" height="10"/><rect x="468" y="410" width="3" height="1"/><rect x="476" y="407" width="3" height="2"/><rect x="484" y="402" width="3" height="4"/><rect x="500" y="401" width="3" height="1"/><rect x="524" y="401" width="3" height="1"/><rect x="532" y="399" width="3" height="2"/><rect x="556" y="399" width="3" height="2"/><rect x="580" y="407" width="3" height="1"/><rect x="588" y="403" width="3" height="3"/><rect x="596" y="401" width="3" height="1"/><rect x="620" y="403" width="3" height="5"/><rect x="684" y="405" width="3" height="7"/><rect x="732" y="454" width="3" height="2"/><rect x="756" y="468" width="3" height="14"/><rect x="764" y="454" width="3" height="13"/><rect x="772" y="447" width="3" height="6"/><rect x="804" y="541" width="3" height="16"/><rect x="820" y="548" width="3" height="6"/><rect x="844" y="559" width="3" height="4"/><rect x="860" y="561" width="3" height="3"/><rect x="868" y="552" width="3" height="8"/><rect x="924" y="574" width="3" height="9"/><rect x="932" y="568" width="3" height="5"/><rect x="948" y="560" width="3" height="8"/><rect x="988" y="570" width="3" height="1"/><rect x="1012" y="572" width="3" height="2"/><rect x="1036" y="571" width="3" height="3"/></g>
</g>
</g>
</svg>
<div class="a" style="left:12px;top:109px;width:1306px;height:567px;border:1px solid #000"></div>
<div class="a" style="left:1318px;top:111px;width:3px;height:1px;background:#000"></div>
<div class="t" style="left:1323px;top:106px;font-size:10.3px;color:#000;letter-spacing:-0.55px">1.13450</div>
<div class="a" style="left:1318px;top:144px;width:3px;height:1px;background:#000"></div>
<div class="t" style="left:1323px;top:139px;font-size:10.3px;color:#000;letter-spacing:-0.55px">1.13090</div>
<div class="a" style="left:1318px;top:177px;width:3px;height:1px;background:#000"></div>
<div class="t" style="left:1323px;top:172px;font-size:10.3px;color:#000;letter-spacing:-0.55px">1.12730</div>
<div class="a" style="left:1318px;top:210px;width:3px;height:1px;background:#000"></div>
<div class="t" style="left:1323px;top:205px;font-size:10.3px;color:#000;letter-spacing:-0.55px">1.12370</div>
<div class="a" style="left:1318px;top:243px;width:3px;height:1px;background:#000"></div>
<div class="t" style="left:1323px;top:238px;font-size:10.3px;color:#000;letter-spacing:-0.55px">1.12000</div>
<div class="a" style="left:1318px;top:276px;width:3px;height:1px;background:#000"></div>
<div class="t" style="left:1323px;top:271px;font-size:10.3px;color:#000;letter-spacing:-0.55px">1.11640</div>
<div class="a" style="left:1318px;top:309px;width:3px;height:1px;background:#000"></div>
<div class="t" style="left:1323px;top:304px;font-size:10.3px;color:#000;letter-spacing:-0.55px">1.11280</div>
<div class="a" style="left:1318px;top:342px;width:3px;height:1px;background:#000"></div>
<div class="t" style="left:1323px;top:337px;font-size:10.3px;color:#000;letter-spacing:-0.55px">1.10910</div>
<div class="a" style="left:1318px;top:375px;width:3px;height:1px;background:#000"></div>
<div class="t" style="left:1323px;top:370px;font-size:10.3px;color:#000;letter-spacing:-0.55px">1.10550</div>
<div class="a" style="left:1318px;top:408px;width:3px;height:1px;background:#000"></div>
<div class="t" style="left:1323px;top:403px;font-size:10.3px;color:#000;letter-spacing:-0.55px">1.10190</div>
<div class="a" style="left:1318px;top:441px;width:3px;height:1px;background:#000"></div>
<div class="t" style="left:1323px;top:436px;font-size:10.3px;color:#000;letter-spacing:-0.55px">1.09830</div>
<div class="a" style="left:1318px;top:474px;width:3px;height:1px;background:#000"></div>
<div class="t" style="left:1323px;top:469px;font-size:10.3px;color:#000;letter-spacing:-0.55px">1.09460</div>
<div class="a" style="left:1318px;top:507px;width:3px;height:1px;background:#000"></div>
<div class="t" style="left:1323px;top:502px;font-size:10.3px;color:#000;letter-spacing:-0.55px">1.09100</div>
<div class="a" style="left:1318px;top:540px;width:3px;height:1px;background:#000"></div>
<div class="t" style="left:1323px;top:535px;font-size:10.3px;color:#000;letter-spacing:-0.55px">1.08740</div>
<div class="a" style="left:1318px;top:573px;width:3px;height:1px;background:#000"></div>
<div class="t" style="left:1323px;top:568px;font-size:10.3px;color:#000;letter-spacing:-0.55px">1.08370</div>
<div class="a" style="left:1318px;top:606px;width:3px;height:1px;background:#000"></div>
<div class="t" style="left:1323px;top:601px;font-size:10.3px;color:#000;letter-spacing:-0.55px">1.08010</div>
<div class="a" style="left:1318px;top:639px;width:3px;height:1px;background:#000"></div>
<div class="t" style="left:1323px;top:634px;font-size:10.3px;color:#000;letter-spacing:-0.55px">1.07650</div>
<div class="a" style="left:1318px;top:672px;width:3px;height:1px;background:#000"></div>
<div class="t" style="left:1323px;top:667px;font-size:10.3px;color:#000;letter-spacing:-0.55px">1.07290</div>
<div class="a" style="left:1319px;top:513px;width:41px;height:11px;background:#ff0000"></div>
<div class="t" style="left:1323px;top:514px;font-size:10.3px;color:#fff;letter-spacing:-0.55px">1.08973</div>
<div class="a" style="left:1319px;top:564px;width:41px;height:11px;background:#000000"></div>
<div class="t" style="left:1323px;top:565px;font-size:10.3px;color:#fff;letter-spacing:-0.55px">1.08408</div>
<div class="a" style="left:1319px;top:618px;width:41px;height:11px;background:#0000ff"></div>
<div class="t" style="left:1323px;top:619px;font-size:10.3px;color:#fff;letter-spacing:-0.55px">1.07820</div>
<div class="a" style="left:13px;top:676px;width:1px;height:3px;background:#000"></div>
<div class="t" style="left:12px;top:680px;font-size:9.2px;color:#000;">4 Mar 2015</div>
<div class="a" style="left:77px;top:676px;width:1px;height:3px;background:#000"></div>
<div class="t" style="left:76px;top:680px;font-size:9.2px;color:#000;">4 Mar 19:30</div>
<div class="a" style="left:141px;top:676px;width:1px;height:3px;background:#000"></div>
<div class="t" style="left:140px;top:680px;font-size:9.2px;color:#000;">4 Mar 23:30</div>
<div class="a" style="left:205px;top:676px;width:1px;height:3px;background:#000"></div>
<div class="t" style="left:204px;top:680px;font-size:9.2px;color:#000;">5 Mar 03:30</div>
<div class="a" style="left:269px;top:676px;width:1px;height:3px;background:#000"></div>
<div class="t" style="left:268px;top:680px;font-size:9.2px;color:#000;">5 Mar 07:30</div>
<div class="a" style="left:333px;top:676px;width:1px;height:3px;background:#000"></div>
<div class="t" style="left:332px;top:680px;font-size:9.2px;color:#000;">5 Mar 11:30</div>
<div class="a" style="left:397px;top:676px;width:1px;height:3px;background:#000"></div>
<div class="t" style="left:396px;top:680px;font-size:9.2px;color:#000;">5 Mar 15:30</div>
<div class="a" style="left:461px;top:676px;width:1px;height:3px;background:#000"></div>
<div class="t" style="left:460px;top:680px;font-size:9.2px;color:#000;">5 Mar 19:30</div>
<div class="a" style="left:525px;top:676px;width:1px;height:3px;background:#000"></div>
<div class="t" style="left:524px;top:680px;font-size:9.2px;color:#000;">5 Mar 23:30</div>
<div class="a" style="left:589px;top:676px;width:1px;height:3px;background:#000"></div>
<div class="t" style="left:588px;top:680px;font-size:9.2px;color:#000;">6 Mar 03:30</div>
<div class="a" style="left:653px;top:676px;width:1px;height:3px;background:#000"></div>
<div class="t" style="left:652px;top:680px;font-size:9.2px;color:#000;">6 Mar 07:30</div>
<div class="a" style="left:717px;top:676px;width:1px;height:3px;background:#000"></div>
<div class="t" style="left:716px;top:680px;font-size:9.2px;color:#000;">6 Mar 11:30</div>
<div class="a" style="left:781px;top:676px;width:1px;height:3px;background:#000"></div>
<div class="t" style="left:780px;top:680px;font-size:9.2px;color:#000;">6 Mar 15:30</div>
<div class="a" style="left:845px;top:676px;width:1px;height:3px;background:#000"></div>
<div class="t" style="left:844px;top:680px;font-size:9.2px;color:#000;">6 Mar 19:30</div>
<div class="a" style="left:909px;top:676px;width:1px;height:3px;background:#000"></div>
<div class="t" style="left:908px;top:680px;font-size:9.2px;color:#000;">6 Mar 23:30</div>
<div class="a" style="left:973px;top:676px;width:1px;height:3px;background:#000"></div>
<div class="t" style="left:972px;top:680px;font-size:9.2px;color:#000;">9 Mar 04:30</div>
<div class="a" style="left:1037px;top:676px;width:1px;height:3px;background:#000"></div>
<div class="t" style="left:1036px;top:680px;font-size:9.2px;color:#000;">9 Mar 08:30</div>
<svg class="a" style="left:15px;top:116px" width="9" height="5"><path d="M0 0H8L4 5Z" fill="#000"/></svg>
<div class="t" style="left:27px;top:113px;font-size:10px;color:#000;letter-spacing:-0.38px;background:#fff;padding:0 1px">EURUSD,M30&nbsp; 1.08363 1.08426 1.08363 1.08408</div>
<svg class="a" style="left:1050px;top:110px" width="10" height="6"><path d="M0 0H9L4.5 5Z" fill="#778899"/></svg>
<div class="a" style="left:8px;top:695px;width:1354px;height:1px;background:#000"></div>
<div class="a" style="left:8px;top:695px;width:2px;height:19px;background:#6a6a6a"></div>
<div class="a" style="left:12px;top:695px;width:89px;height:19px;background:#fff;border:1px solid #000;border-top:none"></div>
<div class="t" style="left:23px;top:699px;font-size:10px;color:#000;">EURUSD,M30</div>
<div class="t" style="left:110px;top:699px;font-size:10px;color:#6d6d6d;">GBPUSD,Weekly</div>
<div class="t" style="left:210px;top:699px;font-size:10px;color:#6d6d6d;">EURJPY,H1</div>
<div class="t" style="left:286px;top:699px;font-size:10px;color:#6d6d6d;">GBPCHF,M15</div>
<div class="t" style="left:370px;top:699px;font-size:10px;color:#6d6d6d;">GBPJPY,H4</div>
<div class="t" style="left:446px;top:699px;font-size:10px;color:#6d6d6d;">EURGBP,Daily</div>
<div class="t" style="left:535px;top:699px;font-size:10px;color:#6d6d6d;">USDCHF,M15</div>
<div class="t" style="left:622px;top:699px;font-size:10px;color:#6d6d6d;">AUDUSD,H1</div>
<div class="t" style="left:703px;top:699px;font-size:10px;color:#6d6d6d;">USDCAD,Daily</div>
<div class="a" style="left:200px;top:699px;width:1px;height:12px;background:#6d6d6d"></div>
<div class="a" style="left:276px;top:699px;width:1px;height:12px;background:#6d6d6d"></div>
<div class="a" style="left:360px;top:699px;width:1px;height:12px;background:#6d6d6d"></div>
<div class="a" style="left:436px;top:699px;width:1px;height:12px;background:#6d6d6d"></div>
<div class="a" style="left:524px;top:699px;width:1px;height:12px;background:#6d6d6d"></div>
<div class="a" style="left:612px;top:699px;width:1px;height:12px;background:#6d6d6d"></div>
<div class="a" style="left:692px;top:699px;width:1px;height:12px;background:#6d6d6d"></div>
<div class="a" style="left:784px;top:699px;width:1px;height:12px;background:#6d6d6d"></div>
<svg class="a" style="left:1333px;top:702px" width="22" height="7"><path d="M4 0V6L0 3Z M18 0V6L22 3Z" fill="#9a9a9a"/></svg>
<div class="a" style="left:8px;top:715px;width:1354px;height:1px;background:#fcfcfc"></div>
<div class="t" style="left:11px;top:722px;font-size:11.4px;color:#000;">Для справки, нажмите F1</div>
<div class="a" style="left:636px;top:718px;width:1px;height:17px;background:#a0a0a0"></div>
<div class="a" style="left:752px;top:718px;width:1px;height:17px;background:#a0a0a0"></div>
<div class="a" style="left:854px;top:718px;width:1px;height:17px;background:#a0a0a0"></div>
<div class="a" style="left:925px;top:718px;width:1px;height:17px;background:#a0a0a0"></div>
<div class="a" style="left:996px;top:718px;width:1px;height:17px;background:#a0a0a0"></div>
<div class="a" style="left:1065px;top:718px;width:1px;height:17px;background:#a0a0a0"></div>
<div class="a" style="left:1135px;top:718px;width:1px;height:17px;background:#a0a0a0"></div>
<div class="a" style="left:1201px;top:718px;width:1px;height:17px;background:#a0a0a0"></div>
<div class="t" style="left:642px;top:722px;font-size:11px;color:#000;">Default</div>
<div class="t" style="left:758px;top:722px;font-size:11px;color:#000;">2015.03.09 05:00</div>
<div class="t" style="left:860px;top:722px;font-size:11px;color:#000;">O: 1.08397</div>
<div class="t" style="left:931px;top:722px;font-size:11px;color:#000;">H: 1.08403</div>
<div class="t" style="left:1003px;top:722px;font-size:11px;color:#000;">L: 1.08352</div>
<div class="t" style="left:1071px;top:722px;font-size:11px;color:#000;">C: 1.08395</div>
<div class="t" style="left:1140px;top:722px;font-size:11px;color:#000;">V: 427</div>
<div class="t" style="left:1264px;top:722px;font-size:11px;color:#000;">3602/5 kb</div>
<svg class="a" style="left:1205px;top:721px" width="25" height="12"><rect x="1" y="0" width="2" height="9" fill="#5e8a1e"/><rect x="1" y="11" width="2" height="1" fill="#a01e1e"/><rect x="4" y="0" width="2" height="9" fill="#5e8a1e"/><rect x="4" y="11" width="2" height="1" fill="#a01e1e"/><rect x="7" y="0" width="2" height="8" fill="#5e8a1e"/><rect x="7" y="10" width="2" height="2" fill="#a01e1e"/><rect x="10" y="0" width="2" height="7" fill="#5e8a1e"/><rect x="10" y="9" width="2" height="3" fill="#a01e1e"/><rect x="13" y="0" width="2" height="6" fill="#5e8a1e"/><rect x="13" y="8" width="2" height="4" fill="#a01e1e"/><rect x="16" y="0" width="2" height="5" fill="#5e8a1e"/><rect x="16" y="7" width="2" height="5" fill="#a01e1e"/><rect x="19" y="0" width="2" height="4" fill="#5e8a1e"/><rect x="19" y="6" width="2" height="6" fill="#a01e1e"/><rect x="22" y="0" width="2" height="3" fill="#5e8a1e"/><rect x="22" y="5" width="2" height="7" fill="#a01e1e"/></svg><svg class="a" style="left:1347px;top:720px" width="15" height="15"><path d="M14 3L3 14M14 7L7 14M14 11L11 14" stroke="#b0b0b0" stroke-width="1.2"/></svg>
<div class="a" style="left:0;top:728px;width:1366px;height:8px;background:rgba(55,120,162,0.55)"></div><div class="a" style="left:0;top:736px;width:1366px;height:8px;background:#5597c4"></div><div class="a" style="left:176px;top:728px;width:59px;height:16px;background:rgba(255,255,255,0.18);border:1px solid rgba(255,255,255,0.35);border-bottom:none"></div><div class="a" style="left:424px;top:728px;width:59px;height:16px;background:rgba(255,255,255,0.18);border:1px solid rgba(255,255,255,0.35);border-bottom:none"></div><div class="a" style="left:486px;top:728px;width:60px;height:16px;background:rgba(255,255,255,0.18);border:1px solid rgba(255,255,255,0.35);border-bottom:none"></div><div class="a" style="left:548px;top:728px;width:59px;height:16px;background:rgba(255,255,255,0.18);border:1px solid rgba(255,255,255,0.35);border-bottom:none"></div><div class="a" style="left:610px;top:728px;width:59px;height:16px;background:rgba(255,255,255,0.18);border:1px solid rgba(255,255,255,0.35);border-bottom:none"></div><svg class="a" style="left:11px;top:734px" width="28" height="10"><path d="M1 5L11 3.3V10H1Z M13 3L27 0.5V10H13Z" fill="#fff"/></svg><svg class="a" style="left:66px;top:733px" width="31" height="11"><rect width="31" height="11" fill="#00a000"/><path d="M8 11V7H23V11" fill="#fff"/><path d="M12 7C12 3 19 3 19 7" stroke="#fff" stroke-width="1.6" fill="none"/></svg><svg class="a" style="left:128px;top:733px" width="31" height="11"><rect x="0" y="1" width="19" height="10" fill="#2b579a"/><rect x="17" y="3" width="13" height="8" fill="#fff"/><path d="M19 5H28M19 8H28" stroke="#2b579a"/></svg><svg class="a" style="left:190px;top:733px" width="32" height="11"><circle cx="16" cy="14" r="13" fill="#db4437"/><path d="M3 14A13 13 0 0 1 8 4L16 14Z" fill="#f4c20d"/><circle cx="16" cy="14" r="6" fill="#fff"/><circle cx="16" cy="14" r="4.5" fill="#4285f4"/></svg><svg class="a" style="left:251px;top:732px" width="30" height="12"><path d="M2 12V2Q2 0 4 0H20L27 12Z" fill="#a8cdf0" stroke="#6aa5dd"/><path d="M12 12A5 5 0 0 1 20 8" stroke="#fff" stroke-width="2" fill="none"/></svg><svg class="a" style="left:313px;top:732px" width="30" height="12"><path d="M2 12V2Q2 0 4 0H20L27 12Z" fill="#fafafa" stroke="#d8d8d8"/><path d="M10 12V6Q10 3.5 13 3.5H16V12" stroke="#e8321e" stroke-width="2" fill="none"/></svg><svg class="a" style="left:376px;top:732px" width="30" height="12"><circle cx="15" cy="14" r="13" fill="#fff"/><path d="M2 6L14 13L29 2" stroke="#e51c1c" stroke-width="4" fill="none"/></svg><svg class="a" style="left:437px;top:733px" width="32" height="11"><ellipse cx="16" cy="12" rx="14" ry="10" fill="#00aff0"/><path d="M12 11Q16 7 20 11" stroke="#fff" stroke-width="2.4" fill="none"/></svg><svg class="a" style="left:500px;top:733px" width="32" height="11"><rect x="1" y="0.5" width="17" height="10" fill="#eaf3fc" stroke="#5a8fd0"/><rect x="8" y="3.5" width="16" height="8" fill="#eaf3fc" stroke="#3a78c8"/><rect x="8" y="3.5" width="16" height="2" fill="#3a78c8"/><circle cx="6" cy="12" r="3.5" fill="#e08a1a"/></svg><svg class="a" style="left:560px;top:734px" width="34" height="10"><ellipse cx="17" cy="14" rx="16" ry="13" fill="#b8231a"/><ellipse cx="13" cy="6" rx="6" ry="3" fill="#d85a4a"/></svg><svg class="a" style="left:624px;top:732px" width="34" height="12"><circle cx="17" cy="13" r="9" fill="#ee1c1c"/><g fill="#ee1c1c"><rect x="14" y="0" width="6" height="6"/><rect x="3" y="7" width="6" height="6" transform="rotate(-45 6 10)"/><rect x="25" y="7" width="6" height="6" transform="rotate(45 28 10)"/></g><circle cx="17" cy="10" r="3" fill="#a8cce0"/></svg><svg class="a" style="left:1160px;top:740px" width="60" height="4"><path d="M10 4L13 0L16 4Z" fill="#fff"/><rect x="28" y="1" width="14" height="3" fill="#fff"/><rect x="48" y="1" width="4" height="3" fill="#fff"/><rect x="53" y="0" width="6" height="4" fill="#fff"/></svg><div class="t" style="left:1310px;top:737px;font-size:11px;color:#fff">8:55</div></body></html>
